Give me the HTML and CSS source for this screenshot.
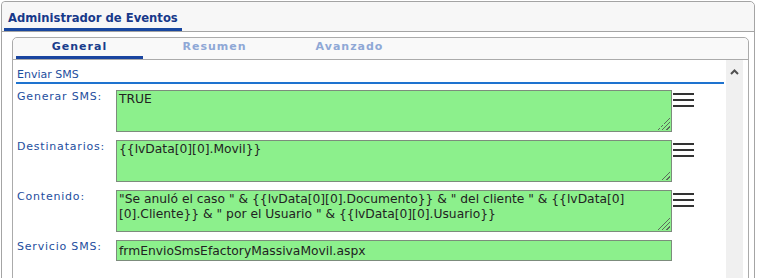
FILE: index.html
```html
<!DOCTYPE html>
<html lang="es">
<head>
    <meta charset="UTF-8">
    <title>Administrador de Eventos</title>
    <link rel="stylesheet" href="styles.css">
</head>
<body>

    <div class="panel">
        <div class="panel-head">
            <span class="panel-tab">Administrador de Eventos</span>
        </div>

        <div class="panel-body">
            <div class="box">
                <div class="tabs">
                    <span class="tab active">General</span>
                    <span class="tab">Resumen</span>
                    <span class="tab">Avanzado</span>
                </div>

                <div class="box-body">
                    <div class="content">
                        <div class="section-title">Enviar SMS</div>

                        <div class="row">
                            <label class="label">Generar SMS:</label>
                            <textarea class="field">TRUE</textarea>
                            <span class="menu"><i></i><i></i><i></i></span>
                        </div>

                        <div class="row">
                            <label class="label">Destinatarios:</label>
                            <textarea class="field">{{lvData[0][0].Movil}}</textarea>
                            <span class="menu"><i></i><i></i><i></i></span>
                        </div>

                        <div class="row">
                            <label class="label">Contenido:</label>
                            <textarea class="field">"Se anuló el caso " &amp; {{lvData[0][0].Documento}} &amp; " del cliente " &amp; {{lvData[0][0].Cliente}} &amp; " por el Usuario " &amp; {{lvData[0][0].Usuario}}</textarea>
                            <span class="menu"><i></i><i></i><i></i></span>
                        </div>

                        <div class="row">
                            <label class="label">Servicio SMS:</label>
                            <input class="field single" type="text" value="frmEnvioSmsEfactoryMassivaMovil.aspx">
                        </div>
                    </div>

                    <!-- barra de scroll -->
                    <div class="scrollbar">
                        <svg width="17" height="24" viewBox="0 0 17 24">
                            <polyline points="5,14 8.5,10.5 12,14" fill="none" stroke="#505050" stroke-width="2"/>
                        </svg>
                    </div>
                </div>
            </div>
        </div>
    </div>

</body>
</html>
```

FILE: styles.css
```css
body {
    margin: 0;
    background: #fff;
    font-family: "DejaVu Sans", Verdana, sans-serif;
    overflow: hidden;
}

.panel {
    margin: 1px 2px 0 1px;
    height: 320px;
    border: 1px solid #a4a4a4;
    border-radius: 4px 5px 0 0;
    background: #fff;
}

.panel-head {
    height: 29px;
    background: #f7f7f7;
    border-bottom: 1px solid #a4a4a4;
    border-radius: 4px 5px 0 0;
}

.panel-tab {
    display: inline-block;
    margin-left: 2px;
    padding: 8px 4px 2px;
    line-height: 16px;
    font-size: 11.6px;
    font-weight: bold;
    color: #17398a;
    border-bottom: 3px solid #1847a0;
}

.panel-body {
    padding: 5px 5px 0 10px;
}

.box {
    height: 300px;
    border: 1px solid #ababab;
    border-radius: 5px 5px 0 0;
    display: flex;
    flex-direction: column;
}

.tabs {
    display: flex;
    gap: 8px;
    padding-left: 3px;
    height: 21px;
    background: #f9f9f9;
    border-bottom: 1px solid #ababab;
    border-radius: 5px 5px 0 0;
}

.tab {
    width: 127px;
    padding: 1px 0;
    height: 16px;
    line-height: 16px;
    text-align: center;
    font-size: 11px;
    font-weight: bold;
    letter-spacing: 1px;
    color: #8fa8d6;
}

.tab.active {
    color: #1a3d8c;
    border-bottom: 3px solid #1a45a0;
}

.box-body {
    flex: 1;
    display: flex;
    padding-right: 5px;
}

.content {
    flex: 1;
    padding: 0 2px 0 3px;
}

.section-title {
    padding: 8px 0 0 1px;
    line-height: 14px;
    font-size: 11px;
    color: #1d4e9e;
    border-bottom: 2px solid #1e73cf;
}

.row {
    display: flex;
    align-items: flex-start;
    margin-top: 6px;
}

.row + .row {
    margin-top: 8px;
}

.label {
    width: 99px;
    padding: 1px 0 0 1px;
    line-height: 12px;
    font-size: 11px;
    letter-spacing: 0.8px;
    color: #1d4e9e;
}

.field {
    box-sizing: border-box;
    width: 556px;
    height: 42px;
    margin: 0;
    padding: 1px 2px;
    border: 1px solid #7c8c7c;
    background-color: #8cf08c;
    font-family: "DejaVu Sans", Verdana, sans-serif;
    font-size: 12.3px;
    line-height: 15px;
    color: #222;
    resize: none;
    overflow: hidden;
    outline: none;
}

textarea.field {
    background-image:
        linear-gradient(to bottom right, #8cf08c 50%, transparent 50%),
        repeating-linear-gradient(135deg, transparent 0 2px, #5a6a5a 2px 3px);
    background-size: 12px 12px, 12px 12px;
    background-position: right 1px bottom 1px, right 1px bottom 1px;
    background-repeat: no-repeat;
}

.field.single {
    height: 21px;
    padding: 0 2px;
}

.menu {
    display: flex;
    flex-direction: column;
    gap: 4px;
    width: 21px;
    margin: 3px 0 0 1px;
}

.menu i {
    display: block;
    height: 2px;
    background: #333;
}

.scrollbar {
    width: 17px;
    background: #f0f0f0;
}

.scrollbar svg {
    display: block;
}
```
